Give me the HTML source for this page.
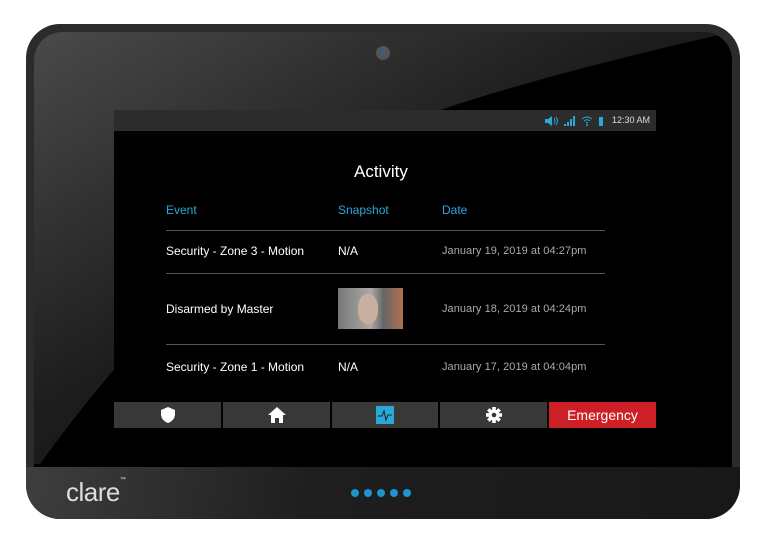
<!DOCTYPE html>
<html><head><style>
body{margin:0;width:768px;height:550px;background:#fff;position:relative;overflow:hidden;font-family:"Liberation Sans",sans-serif}
.dev{position:absolute;left:26px;top:24px;width:714px;height:495px;border-radius:34px;background:#2b2b2b;overflow:hidden}
.face{position:absolute;left:8px;top:8px;width:698px;height:440px;border-radius:28px 28px 0 0;background:#000;overflow:hidden}
.band{position:absolute;left:0;top:443px;width:714px;height:52px;background:linear-gradient(100deg,#3e3e3e,#1e1e1e 40%,#181818);}
.screen{position:absolute;left:114px;top:110px;width:542px;height:318px;background:#000}
.status{position:absolute;left:0;top:0;width:542px;height:21px;background:#2c2c2c}
.t{position:absolute;color:#fff;font-size:12px;white-space:nowrap}
.h{color:#2aa8d8}
.g{color:#aaa;font-size:11px;letter-spacing:0.05px}
.line{position:absolute;left:52px;width:439px;height:1px;background:#555}
.nav{position:absolute;top:292px;height:26px;background:#383838;display:flex;align-items:center;justify-content:center}
</style></head><body>
<div class="dev">
 <div class="face">
  <svg width="698" height="440" style="position:absolute;left:0;top:0">
   <defs><linearGradient id="s" x1="0" y1="0" x2="1" y2="1"><stop offset="0" stop-color="#4a4a4a"/><stop offset="0.45" stop-color="#1c1c1c"/><stop offset="1" stop-color="#111"/></linearGradient></defs>
   <path d="M0 0 H698 Q520 40 406 78 Q180 190 6 432 L0 432 Z" fill="url(#s)"/>
  </svg>
  <div style="position:absolute;left:342px;top:14px;width:14px;height:14px;border-radius:50%;background:#555"><div style="position:absolute;left:4px;top:4px;width:6px;height:6px;border-radius:50%;background:#3a5b8c"></div></div>
 </div>
 <div class="band">
  <div style="position:absolute;left:40px;top:10px;color:#ddd;font-size:26px;letter-spacing:-0.5px;font-weight:300">clare<span style="font-size:6px;vertical-align:top">™</span></div>
  <div style="position:absolute;left:325px;top:22px;display:flex;gap:5px">
   <i style="width:8px;height:8px;border-radius:50%;background:#1e93cf"></i><i style="width:8px;height:8px;border-radius:50%;background:#1e93cf"></i><i style="width:8px;height:8px;border-radius:50%;background:#1e93cf"></i><i style="width:8px;height:8px;border-radius:50%;background:#1e93cf"></i><i style="width:8px;height:8px;border-radius:50%;background:#1e93cf"></i>
  </div>
 </div>
</div>
<div class="screen">
 <div class="status">
  <svg style="position:absolute;left:430px;top:5px" width="80" height="12">
   <path d="M1 4h3l4-3v10l-4-3H1z" fill="#2aa8d8"/><path d="M10 3q2 3 0 6M12 2q3 4 0 8" stroke="#2aa8d8" fill="none"/>
   <path d="M20 11h2v-2h-2zM23 11h2v-4h-2zM26 11h2v-7h-2zM29 11h2v-10h-2z" fill="#2aa8d8"/>
   <path d="M38 4q5-4 10 0M40 6q3-2.5 6 0M42 8q1-1 2 0" stroke="#2aa8d8" fill="none"/><circle cx="43" cy="10" r="1" fill="#2aa8d8"/>
   <rect x="55" y="2" width="4" height="9" fill="#2aa8d8"/>
  </svg>
  <div class="t" style="left:498px;top:5px;font-size:9px;color:#ddd">12:30 AM</div>
 </div>
 <div class="t" style="left:240px;top:52px;font-size:17px">Activity</div>
 <div class="t h" style="left:52px;top:93px">Event</div>
 <div class="t h" style="left:224px;top:93px">Snapshot</div>
 <div class="t h" style="left:328px;top:93px">Date</div>
 <div class="line" style="top:120px"></div>
 <div class="t" style="left:52px;top:134px">Security - Zone 3 - Motion</div>
 <div class="t" style="left:224px;top:134px">N/A</div>
 <div class="t g" style="left:328px;top:135px">January 19, 2019 at 04:27pm</div>
 <div class="line" style="top:163px"></div>
 <div class="t" style="left:52px;top:192px">Disarmed by Master</div>
 <div style="position:absolute;left:224px;top:178px;width:65px;height:41px;background:linear-gradient(90deg,#777,#aaa 50%,#666 70%,#b07050)"><div style="position:absolute;left:20px;top:6px;width:20px;height:30px;border-radius:45%;background:#c8b0a0"></div></div>
 <div class="t g" style="left:328px;top:193px">January 18, 2019 at 04:24pm</div>
 <div class="line" style="top:234px"></div>
 <div class="t" style="left:52px;top:250px">Security - Zone 1 - Motion</div>
 <div class="t" style="left:224px;top:250px">N/A</div>
 <div class="t g" style="left:328px;top:251px">January 17, 2019 at 04:04pm</div>
 <div class="nav" style="left:0;width:107px"><svg width="14" height="16"><path d="M7 0L14 3V8Q13 14 7 16Q1 14 0 8V3Z" fill="#fff"/></svg></div>
 <div class="nav" style="left:109px;width:107px"><svg width="18" height="16"><path d="M9 0L18 8H15V16H11V11H7V16H3V8H0Z" fill="#fff"/></svg></div>
 <div class="nav" style="left:218px;width:106px"><svg width="18" height="18"><rect width="18" height="18" fill="#2aa8d8"/><path d="M2 10H6L8 5L10 14L12 9H16" stroke="#222" fill="none"/></svg></div>
 <div class="nav" style="left:326px;width:107px"><svg width="16" height="16" viewBox="-8 -8 16 16"><g fill="#fff"><circle r="5.5"/><rect x="-1.8" y="-8" width="3.6" height="16"/><rect x="-1.8" y="-8" width="3.6" height="16" transform="rotate(45)"/><rect x="-1.8" y="-8" width="3.6" height="16" transform="rotate(90)"/><rect x="-1.8" y="-8" width="3.6" height="16" transform="rotate(135)"/></g><circle r="2.3" fill="#383838"/></svg></div>
 <div class="nav" style="left:435px;width:107px;background:#cc1f26;color:#fff;font-size:14px">Emergency</div>
</div>
</body></html>
